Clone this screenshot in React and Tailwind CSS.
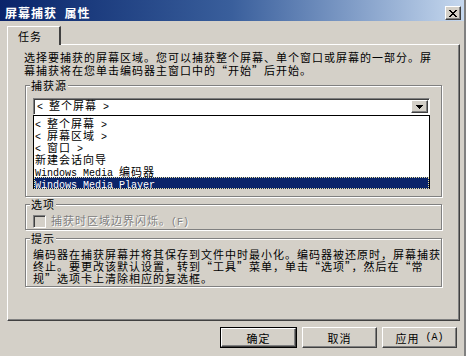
import React from 'react';

const raised = 'border border-t-white border-l-white border-r-[#404040] border-b-[#404040] shadow-[inset_-1px_-1px_0_#808080]';
const sunken = 'border border-t-[#808080] border-l-[#808080] border-r-white border-b-white shadow-[inset_1px_1px_0_#404040]';
const etched = 'border border-[#808080] shadow-[1px_1px_0_#fff,inset_1px_1px_0_#fff]';
const mono = "font-['Liberation_Mono',monospace] text-[10px] tracking-normal";

const xRows = ['XX....XX', '.XX..XX.', '..XXXX..', '...XX...', '..XXXX..', '.XX..XX.', 'XX....XX'];
const arrowRows = ['XXXXXXX', '.XXXXX.', '..XXX..', '...X...'];

function Pixels({ rows, color = '#000' }) {
  return (
    <svg width={rows[0].length} height={rows.length} shapeRendering="crispEdges">
      {rows.map((r, y) =>
        r.split('').map((c, x) =>
          c === 'X' ? <rect key={y + '-' + x} x={x} y={y} width="1" height="1" fill={color} /> : null
        )
      )}
    </svg>
  );
}

function GroupBox({ label, className, children }) {
  return (
    <div className={`${etched} ml-[1px] w-[417px] ${className}`}>
      <div className="-mt-[7px] ml-[4px] px-[1px] w-fit bg-[#d4d0c8] leading-[12px]">{label}</div>
      {children}
    </div>
  );
}

function Btn({ children, isDefault }) {
  if (isDefault) {
    return (
      <div className="border border-black w-[77px] h-[21px] flex">
        <div className={`${raised} flex-1 flex items-center justify-center leading-[12px]`}>{children}</div>
      </div>
    );
  }
  return (
    <div className={`${raised} w-[75px] h-[21px] flex items-center justify-center leading-[12px]`}>{children}</div>
  );
}

const Lt = () => <span className={mono}>&lt;&nbsp;</span>;
const Gt = () => <span className={mono}>&nbsp;&gt;</span>;

const items = [
  <><Lt />整个屏幕<Gt /></>,
  <><Lt />屏幕区域<Gt /></>,
  <><Lt />窗口<Gt /></>,
  <>新建会话向导</>,
  <><span className={mono}>Windows Media </span>编码器</>,
  <span className={mono}>Windows Media Player</span>,
];

export default function App() {
  return (
    <div className="w-[466px] h-[356px] bg-[#d4d0c8] text-black text-[11px] tracking-[1px] font-['Noto_Sans_CJK_SC','Liberation_Sans',sans-serif] flex flex-col overflow-hidden border-r-2 border-r-[#808080]">
      <div className="h-[21px] shrink-0 bg-gradient-to-r from-[#0a246a] via-[#3a5f9c] to-[#c6d8ee] flex items-start justify-between pl-[5px] pr-[3px]">
        <span className="text-white font-bold text-[12px] leading-[13px] pt-[6px] tracking-[1px]">屏幕捕获&nbsp;&nbsp;属性</span>
        <div className={`${raised} bg-[#d4d0c8] w-[16px] h-[14px] mt-[6px] flex items-center justify-center`}>
          <Pixels rows={xRows} />
        </div>
      </div>

      <div className="flex flex-col pl-[7px] pt-[5px]">
        <div className="relative z-10 -mb-[1px] w-[54px] h-[19px] bg-[#d4d0c8] border-t border-l border-t-white border-l-white border-r-2 border-r-[#404040] pl-[10px] pt-[3px] leading-[12px]">
          任务
        </div>
        <div className={`${raised} w-[453px] h-[277px] px-[16px] pt-[6px] flex flex-col`}>
          <div className="leading-[13px] whitespace-nowrap">
            选择要捕获的屏幕区域。您可以捕获整个屏幕、单个窗口或屏幕的一部分。屏
            <br />
            幕捕获将在您单击编码器主窗口中的“开始”后开始。
          </div>

          <GroupBox label="捕获源" className="mt-[8px] h-[112px]">
            <div className="ml-[7px] mt-[7px] w-[397px]">
              <div className={`${sunken} bg-white h-[17px] flex items-center justify-between pl-[3px] pr-[1px]`}>
                <span className="leading-[12px]"><Lt />整个屏幕<Gt /></span>
                <div className={`${raised} bg-[#d4d0c8] w-[17px] h-[13px] flex items-center justify-center`}>
                  <Pixels rows={arrowRows} />
                </div>
              </div>
              <div className="border border-black bg-white h-[74px] pt-[1px]">
                {items.map((it, i) => (
                  <div
                    key={i}
                    className={`h-[12px] leading-[12px] pl-[1px] whitespace-nowrap ${i === 5 ? 'bg-[#0a246a] text-white outline-1 outline-dotted outline-[#e8e0a0] -outline-offset-1' : ''}`}
                  >
                    {it}
                  </div>
                ))}
              </div>
            </div>
          </GroupBox>

          <GroupBox label="选项" className="mt-[7px] h-[26px]">
            <div className="ml-[7px] mt-[4px] flex items-center gap-[5px]">
              <div className={`${sunken} w-[13px] h-[13px] bg-[#d4d0c8]`} />
              <span className="text-[#808080] leading-[12px] [text-shadow:1px_1px_0_#fff]">捕获时区域边界闪烁。<span className={mono}>(F)</span></span>
            </div>
          </GroupBox>

          <GroupBox label="提示" className="mt-[8px] h-[49px]">
            <div className="ml-[7px] mt-[4px] leading-[12px] whitespace-nowrap">
              编码器在捕获屏幕并将其保存到文件中时最小化。编码器被还原时，屏幕捕获
              <br />
              终止。要更改该默认设置，转到“工具”菜单，单击“选项”，然后在“常
              <br />
              规”选项卡上清除相应的复选框。
            </div>
          </GroupBox>
        </div>

        <div className="flex justify-end gap-[5px] mt-[6px] pr-[7px]">
          <Btn isDefault>确定</Btn>
          <Btn>取消</Btn>
          <Btn>应用<span className={mono}>&nbsp;(A)</span></Btn>
        </div>
      </div>
    </div>
  );
}
